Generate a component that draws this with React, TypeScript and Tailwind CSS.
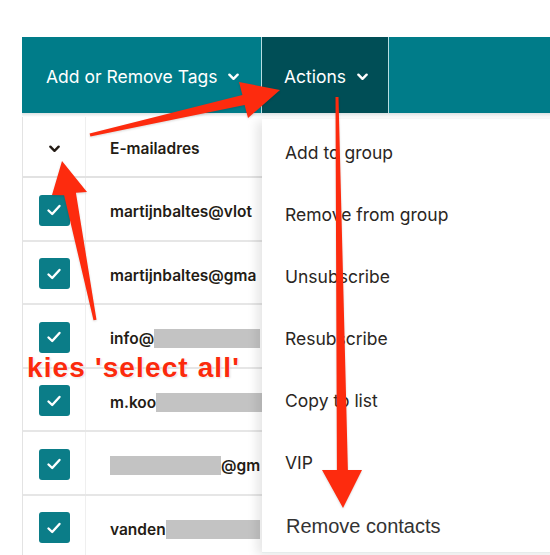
import React from "react";

const sans = { fontFamily: "Inter, 'Open Sans', sans-serif" };

function Chevron({ className = "" }: { className?: string }) {
  return (
    <svg viewBox="0 0 12 8" className={className} fill="none">
      <polyline
        points="1.5,1.5 6,6 10.5,1.5"
        stroke="currentColor"
        strokeWidth="2.6"
        strokeLinecap="round"
        strokeLinejoin="round"
      />
    </svg>
  );
}

function Checkbox() {
  return (
    <div className="w-[31px] h-[31px] rounded-[3px] bg-[#0b7d88] flex items-center justify-center">
      <svg viewBox="0 0 16 16" className="w-[16px] h-[16px]" fill="none">
        <polyline
          points="2.5,8.5 6.2,12 13.5,4"
          stroke="white"
          strokeWidth="2.4"
          strokeLinecap="round"
          strokeLinejoin="round"
        />
      </svg>
    </div>
  );
}

const Redact = ({ w }: { w: number }) => (
  <span
    className="inline-block shrink-0 h-[19px] bg-[#c3c3c3]"
    style={{ width: w }}
  />
);

// emails are cut where the menu covers them
const rows: React.ReactNode[] = [
  <span>martijnbaltes@vlot</span>,
  <span>martijnbaltes@gma</span>,
  <>
    <span>info@</span>
    <Redact w={106} />
  </>,
  <>
    <span>m.koo</span>
    <Redact w={106} />
  </>,
  <>
    <Redact w={111} />
    <span>@gm</span>
  </>,
  <>
    <span>vanden</span>
    <Redact w={94} />
  </>,
];

const menu = [
  "Add to group",
  "Remove from group",
  "Unsubscribe",
  "Resubscribe",
  "Copy to list",
  "VIP",
];

export default function App() {
  return (
    <div
      className="relative w-[550px] h-[555px] overflow-hidden bg-white"
      style={sans}
    >
      <div className="pt-[37px] pl-[22px]">
        {/* toolbar */}
        <div className="flex h-[76px] bg-[#007c89] text-white text-[17.5px]">
          <div className="w-[239px] flex items-center gap-[10px] pl-[24px] pt-[4px]">
            <span>Add or Remove Tags</span>
            <Chevron className="w-[11px] h-[8px]" />
          </div>
          <div className="w-px bg-[#b8dde1]" />
          <div className="w-[126px] flex items-center gap-[11px] pl-[22px] pt-[4px] bg-[#004e56]">
            <span>Actions</span>
            <Chevron className="w-[11px] h-[8px]" />
          </div>
          <div className="w-px bg-[#b8dde1]" />
          <div className="flex-1" />
        </div>

        <div className="h-[4px] bg-gradient-to-b from-[#dde2e3] to-white" />

        {/* table */}
        <div className="border-l border-[#e3e3e3] text-[#241c15]">
          <div className="flex h-[61px] border-b-2 border-[#e2e2e2]">
            <div className="w-[63px] border-r border-[#efefef] flex items-center justify-center pt-[5px]">
              <Chevron className="w-[11px] h-[8px]" />
            </div>
            <div className="w-[176px] flex items-center pl-[24px] text-[15.5px] font-semibold pt-[4px]">
              E-mailadres
            </div>
          </div>
          {rows.map((r, i) => (
            <div
              key={i}
              className="flex h-[63.5px] border-b-2 border-[#e6e6e6]"
            >
              <div className="w-[63px] border-r border-[#efefef] flex items-center justify-center pt-[3px]">
                <Checkbox />
              </div>
              <div className="w-[176px] flex items-center pl-[24px] pt-[6px] text-[15.5px] font-semibold whitespace-nowrap overflow-hidden">
                {r}
              </div>
            </div>
          ))}
        </div>
      </div>

      {/* dropdown menu */}
      <div className="absolute left-[262px] top-[119px] w-[300px] h-[434px] bg-white border-b border-[#e6ecec] shadow-[-5px_2px_10px_rgba(0,0,0,0.10)] z-10 pt-[2px] flex flex-col">
        {menu.map((m) => (
          <div
            key={m}
            className="h-[62px] flex items-center pl-[23px] pt-[2px] text-[17.5px] text-[#2a2623]"
          >
            {m}
          </div>
        ))}
        <div
          className="flex-1 flex items-center pl-[24px] pt-[6px] text-[20px] text-[#333]"
          style={{ fontFamily: "'Liberation Sans', Arial, sans-serif" }}
        >
          Remove contacts
        </div>
      </div>

      {/* annotation arrows */}
      <svg
        className="absolute inset-0 z-20 pointer-events-none"
        width="550"
        height="555"
        viewBox="0 0 550 555"
      >
        <g fill="#fd2b0e" style={{ filter: "drop-shadow(0 1px 1px rgba(0,0,0,0.15))" }}>
          <polygon points="89.6,133.5 242.4,95.1 239,82 280,90 248,118 244.6,104.9 90.4,136.5" />
          <polygon points="335.5,97 338.5,97 347.9,470 362,470 343,508 322,470 336.9,470" />
          <polygon points="93.5,320.3 64.1,195.2 52,195 62,161 87,192 75.9,192.8 96.5,319.7" />
        </g>
      </svg>

      <div
        className="absolute left-[27px] top-[347px] z-30 text-[28px] font-bold tracking-[0.04em] text-[#fb2a0c] whitespace-nowrap"
        style={{
          fontFamily: "'Liberation Sans', Arial, sans-serif",
          textShadow:
            "0 0 2px #fff, 0 0 2px #fff, 1px 1px 2px rgba(0,0,0,0.15)",
        }}
      >
        kies 'select all'
      </div>
    </div>
  );
}
